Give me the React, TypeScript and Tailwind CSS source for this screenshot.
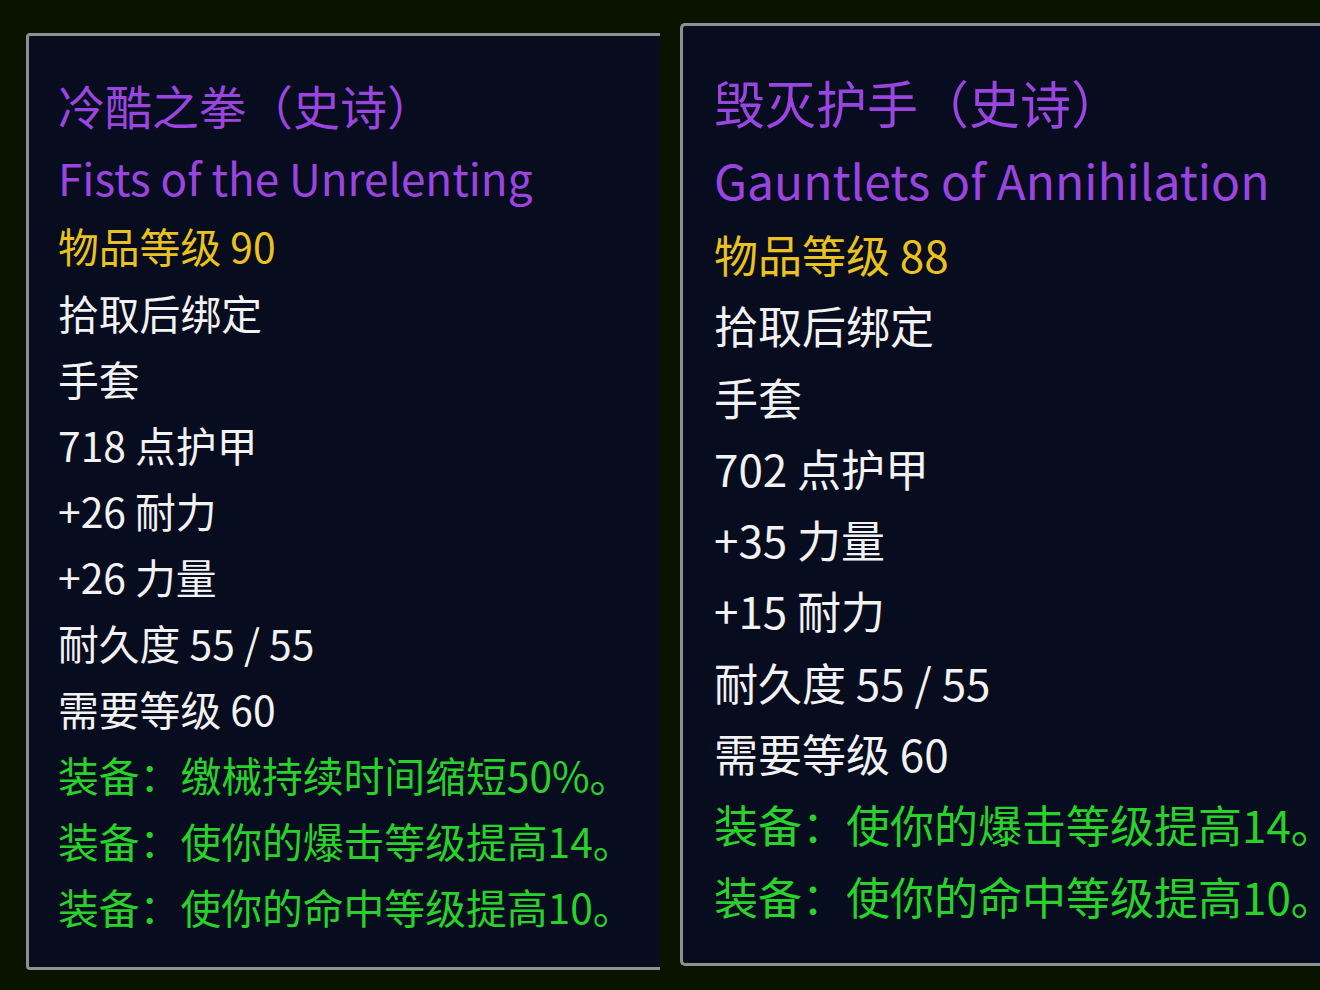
import React from "react";

const font = { fontFamily: '"Noto Sans CJK SC", "Noto Sans", sans-serif' };

export default function App() {
  return (
    <div className="flex h-[990px] w-[1320px] overflow-hidden bg-[#081300]" style={font}>
      {/* Left tooltip */}
      <div className="ml-[26px] mt-[33px] h-[937px] w-[634px] shrink-0 rounded-l-[4px] border-y-[3px] border-l-[3px] border-[#8d9191] bg-[#070c1f] pl-[29px] pt-[32px]">
        <div className="text-[47px] leading-[74px] text-[#9b45e0]">冷酷之拳（史诗）</div>
        <div className="text-[44px] leading-[70px] text-[#9b45e0]">Fists of the Unrelenting</div>
        <div className="text-[40.8px] leading-[68px] text-[#e9c21f]">物品等级 90</div>
        <div className="text-[40.8px] leading-[66px] text-[#f2f2f2]">
          <div>拾取后绑定</div>
          <div>手套</div>
          <div>718 点护甲</div>
          <div>+26 耐力</div>
          <div>+26 力量</div>
          <div>耐久度 55 / 55</div>
          <div>需要等级 60</div>
        </div>
        <div className="whitespace-nowrap text-[40.8px] leading-[66px] text-[#29d22b]">
          <div>装备：缴械持续时间缩短50%。</div>
          <div>装备：使你的爆击等级提高14。</div>
          <div>装备：使你的命中等级提高10。</div>
        </div>
      </div>

      {/* Right tooltip */}
      <div className="ml-[20px] mt-[23px] h-[943px] min-w-0 flex-1 rounded-l-[5px] border-y-[3px] border-l-[3px] border-[#8d9191] bg-[#070c1f] pl-[31px] pt-[38px]">
        <div className="text-[51px] leading-[76px] text-[#9b45e0]">毁灭护手（史诗）</div>
        <div className="text-[48px] leading-[79px] text-[#9b45e0]">Gauntlets of Annihilation</div>
        <div className="text-[44px] leading-[71.3px] text-[#e9c21f]">物品等级 88</div>
        <div className="text-[44px] leading-[71.3px] text-[#f2f2f2]">
          <div>拾取后绑定</div>
          <div>手套</div>
          <div>702 点护甲</div>
          <div>+35 力量</div>
          <div>+15 耐力</div>
          <div>耐久度 55 / 55</div>
          <div>需要等级 60</div>
        </div>
        <div className="whitespace-nowrap text-[44px] leading-[71.3px] text-[#29d22b]">
          <div>装备：使你的爆击等级提高14。</div>
          <div>装备：使你的命中等级提高10。</div>
        </div>
      </div>
    </div>
  );
}
